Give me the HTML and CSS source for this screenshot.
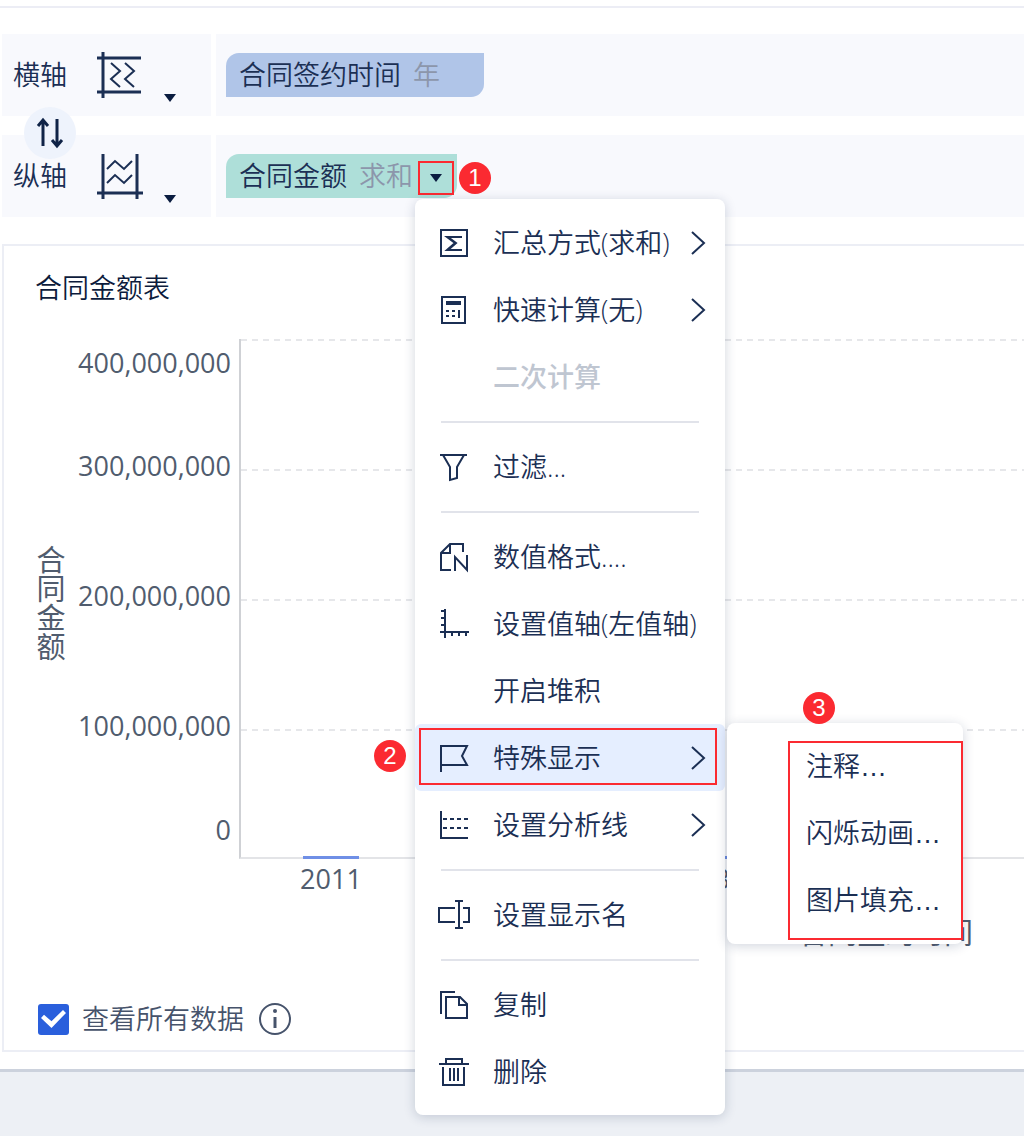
FILE: index.html
```html
<!DOCTYPE html>
<html lang="zh-CN">
<head>
<meta charset="utf-8">
<meta name="viewport" content="width=device-width, initial-scale=1">
<title>合同金额表</title>
<link rel="stylesheet" href="styles.css">
</head>
<body>
<main class="page">
  <header class="topbar"></header>

  <section class="axes">
    <div class="axis-row">
      <div class="axis-head">
        <span class="axis-name">横轴</span>
        <button class="axis-type" type="button" aria-label="横轴类型">
          <svg class="axis-icon" viewBox="0 0 48 48"><path class="bold" d="M7 1v46M1 7h44M1 41h44"/><path d="M15 12l9 8-9 8 9 8M29 12l9 8-9 8 9 8"/></svg>
          <svg class="caret" viewBox="0 0 12 8"><path d="M0 0h12L6 8z"/></svg>
        </button>
      </div>
      <div class="axis-fields">
        <div class="pill pill-blue"><span>合同签约时间</span><span class="pill-note">年</span></div>
      </div>
    </div>
    <div class="axis-row">
      <div class="axis-head">
        <span class="axis-name">纵轴</span>
        <button class="axis-type" type="button" aria-label="纵轴类型">
          <svg class="axis-icon" viewBox="0 0 48 48"><path class="bold" d="M7 2v45M41 2v45M1 41h46"/><path d="M11 17l8-8 9 8 8-8M11 31l8-8 9 8 8-8"/></svg>
          <svg class="caret" viewBox="0 0 12 8"><path d="M0 0h12L6 8z"/></svg>
        </button>
      </div>
      <div class="axis-fields">
        <div class="pill pill-green">
          <span>合同金额</span><span class="pill-note">求和</span>
          <button class="pill-toggle" type="button" aria-label="字段菜单" aria-expanded="true">
            <svg class="caret" viewBox="0 0 12 8"><path d="M0 0h12L6 8z"/></svg>
          </button>
          <span class="badge badge-1">1</span>

          <ul class="menu">
            <li class="item"><button type="button">
              <svg class="icon" viewBox="0 0 30 30"><path d="M2 2h26v26H2z"/><path d="M23 9H8l8 6-8 7h15M9 9l8 6-8 7"/></svg>
              <span>汇总方式(求和)</span>
              <svg class="chevron" viewBox="0 0 14 24"><path d="M1 1l12 11L1 23"/></svg></button></li>
            <li class="item"><button type="button">
              <svg class="icon" viewBox="0 0 30 30"><path d="M3 2h23v26H3z"/><path stroke-width="4" d="M7 8h15"/><path d="M7 16h3M13 16h3M7 21h3M13 21h3M20 15v8"/></svg>
              <span>快速计算(无)</span>
              <svg class="chevron" viewBox="0 0 14 24"><path d="M1 1l12 11L1 23"/></svg></button></li>
            <li class="item"><button type="button" disabled><span class="icon"></span><span>二次计算</span></button></li>
            <li class="rule" role="separator"></li>
            <li class="item"><button type="button">
              <svg class="icon" viewBox="0 0 30 30"><path d="M1 3h27M4 3l7 12v13l7-2V15l7-12"/></svg>
              <span>过滤...</span></button></li>
            <li class="rule" role="separator"></li>
            <li class="item"><button type="button">
              <svg class="icon" viewBox="0 0 30 30"><path d="M12 28H2V11l9-9h13v8M11 2v9H2M16 29V15l12 13V13"/></svg>
              <span>数值格式....</span></button></li>
            <li class="item"><button type="button">
              <svg class="icon" viewBox="0 0 30 30"><path d="M6 0v29M1 23h29M2 2h4M2 9h4M2 16h4M13 23v4M20 23v4M27 23v4"/></svg>
              <span>设置值轴(左值轴)</span></button></li>
            <li class="item"><button type="button"><span class="icon"></span><span>开启堆积</span></button></li>
            <li class="item item-open"><button type="button" aria-expanded="true">
              <svg class="icon" viewBox="0 0 30 30"><path d="M2 29V3h26l-5 10 5 9H2"/></svg>
              <span>特殊显示</span>
              <svg class="chevron" viewBox="0 0 14 24"><path d="M1 1l12 11L1 23"/></svg></button>
              <span class="frame frame-2"></span>
              <span class="badge badge-2">2</span>
              <ul class="submenu">
                <li class="item"><button type="button">注释…</button></li>
                <li class="item"><button type="button">闪烁动画…</button></li>
                <li class="item"><button type="button">图片填充…</button></li>
                <li class="frame frame-3" aria-hidden="true"></li>
                <li class="badge badge-3">3</li>
              </ul></li>
            <li class="item"><button type="button">
              <svg class="icon" viewBox="0 0 30 30"><path d="M2 1v27h27"/><path stroke-dasharray="4 3" d="M4 9h25M4 18h25"/></svg>
              <span>设置分析线</span>
              <svg class="chevron" viewBox="0 0 14 24"><path d="M1 1l12 11L1 23"/></svg></button></li>
            <li class="rule" role="separator"></li>
            <li class="item"><button type="button">
              <svg class="icon" viewBox="0 0 30 30"><path d="M16 8H0v14h16M24 8h6v14h-6M20 1v27M16 1h8M16 28h8"/></svg>
              <span>设置显示名</span></button></li>
            <li class="rule" role="separator"></li>
            <li class="item"><button type="button">
              <svg class="icon" viewBox="0 0 30 30"><path d="M2 24V2h14M7 7h14l7 7v14H7zM20 7v8h8"/></svg>
              <span>复制</span></button></li>
            <li class="item"><button type="button">
              <svg class="icon" viewBox="0 0 30 30"><path d="M0 7h30M7 7V2h16v5M4 10v18h21V10M11 11v13M15 11v13M19 11v13"/></svg>
              <span>删除</span></button></li>
          </ul>
        </div>
      </div>
    </div>
    <button class="swap" type="button" aria-label="交换横纵轴">
      <svg viewBox="0 0 30 30"><path d="M8 28V3M3 8l5-6 5 6M22 1v26M17 22l5 6 5-6"/></svg>
    </button>
  </section>

  <section class="card">
    <h1 class="card-title">合同金额表</h1>
    <div class="chart">
      <div class="y-title">合同金额</div>
      <div class="y-labels">
        <span class="y-first">400,000,000</span>
        <span>300,000,000</span>
        <span>200,000,000</span>
        <span>100,000,000</span>
        <span class="y-last">0</span>
      </div>
      <div class="plot-view">
        <div class="plot">
          <div class="bands"><i></i><i></i><i></i><i></i></div>
          <div class="years">
            <div class="year">2011</div>
            <div class="year">2012</div>
            <div class="year">2013</div>
            <div class="year">2014</div>
          </div>
          <div class="x-title">合同签约时间</div>
        </div>
      </div>
    </div>
    <footer class="card-foot">
      <input class="tick" type="checkbox" id="all-data" checked>
      <label for="all-data">查看所有数据</label>
      <svg class="info" viewBox="0 0 32 32"><circle cx="16" cy="16" r="15"/><path d="M16 14v11"/><circle class="dot" cx="16" cy="8" r="2"/></svg>
    </footer>
  </section>
  <div class="bottom"></div>
</main>
</body>
</html>
```

FILE: styles.css
```css
* { box-sizing: border-box; }

body {
  margin: 0;
  background: #fff;
  color: #1b2f54;
  font: 350 27px/40px "Open Sans", "Noto Sans CJK SC", sans-serif;
}

ul { list-style: none; margin: 0; padding: 0; }

button {
  margin: 0;
  padding: 0;
  border: 0;
  background: none;
  color: inherit;
  font: inherit;
  text-align: left;
}

svg {
  display: block;
  fill: none;
  stroke: #1b2f54;
  stroke-width: 2;
  overflow: visible;
}

.page {
  display: flex;
  flex-direction: column;
  min-height: 100vh;
  overflow: hidden;
}

.topbar { height: 8px; border-bottom: 2px solid #ecedf5; }

/* axis shelves */
.axes {
  position: relative;
  z-index: 2;
  display: flex;
  flex-direction: column;
  gap: 19px;
  padding: 26px 0 27px 2px;
}

.axis-row { display: flex; gap: 5px; height: 82px; }

.axis-head {
  display: flex;
  align-items: center;
  gap: 29px;
  width: 209px;
  padding-left: 11px;
  background: #f8f9fd;
}

.axis-type { display: flex; align-items: flex-end; gap: 20px; }
.axis-icon { width: 48px; height: 48px; }
.axis-icon .bold { stroke-width: 3; }
.caret { width: 12px; height: 8px; fill: #0b1d40; stroke: none; }
.axis-type .caret { margin-bottom: -3px; }

.axis-fields {
  display: flex;
  flex: 1;
  align-items: center;
  padding-left: 10px;
  background: #f8f9fd;
}

.pill {
  position: relative;
  display: flex;
  align-items: center;
  gap: 12px;
  height: 44px;
  padding-left: 13px;
  border-radius: 13px 0;
}

.pill-blue { width: 258px; background: #b0c5e8; }
.pill-green { width: 231px; background: #aedfd9; }
.pill-note { color: #8c96ab; }

.pill-toggle {
  position: absolute;
  top: 7px;
  right: 3px;
  display: flex;
  align-items: center;
  justify-content: center;
  width: 36px;
  height: 34px;
  border: 2px solid #fb2a31;
}

.swap {
  position: absolute;
  top: 99px;
  left: 24px;
  display: flex;
  align-items: center;
  justify-content: center;
  width: 52px;
  height: 52px;
  border-radius: 50%;
  background: #eef3fc;
}

.swap svg { width: 30px; height: 30px; stroke-width: 3; stroke: #0f2347; }

/* numbered callouts */
.badge {
  position: absolute;
  width: 32px;
  height: 32px;
  border-radius: 50%;
  background: #fb2a31;
  color: #fff;
  font: 400 24px/32px "Liberation Sans", sans-serif;
  text-align: center;
}

.badge-1 { top: 8px; left: 233px; }
.badge-2 { top: 16px; left: -41px; }
.badge-3 { top: -31px; left: 76px; }

.frame { position: absolute; border: 2px solid #fb2a31; pointer-events: none; }
.frame-2 { inset: 4px 8px 6px 4px; }
.frame-3 { inset: 18px 0 4px 61px; }

/* menus */
.menu,
.submenu {
  position: absolute;
  padding: 10px 0;
  border-radius: 8px;
  background: #fff;
  box-shadow: 0 2px 12px rgba(27, 47, 84, .2);
}

.menu { top: 45px; left: 189px; width: 310px; }
.submenu { top: -1px; left: 312px; width: 236px; }

.item button {
  display: flex;
  align-items: center;
  width: 100%;
  height: 67px;
  padding: 0 20px 0 24px;
  white-space: nowrap;
}

.item button:disabled { color: #bfc6d1; font-weight: 500; }
.icon { flex: none; width: 30px; height: 30px; margin-right: 24px; }
.chevron { flex: none; width: 14px; height: 24px; margin-left: auto; }
.item-open { position: relative; }
.item-open > button { border-radius: 6px; background: #e5eeff; }

.submenu .item button {
  padding-left: 79px;
  font-family: "Liberation Sans", "Noto Sans CJK SC", sans-serif;
}

.rule {
  height: 2px;
  margin: 11px 26px 10px;
  background: #e1e3ea;
}

/* chart card */
.card {
  margin-left: 2px;
  padding: 22px 0 15px 31px;
  border: 2px solid #eceef5;
  border-right: 0;
}

.card-title {
  margin: 0 0 31px;
  color: #0c1b3c;
  font-size: 27px;
  font-weight: 350;
  line-height: 40px;
}

.chart { display: flex; color: #505c6e; font-weight: 400; }

.y-title {
  height: 520px;
  padding-top: 8px;
  font-size: 29px;
  line-height: 29px;
  text-align: center;
  writing-mode: vertical-rl;
}

.y-labels {
  display: grid;
  grid-template-rows: 62px 130px 130px 130px 68px;
  align-items: center;
  width: 175px;
  height: 520px;
  padding-right: 8px;
  text-align: right;
}

.y-first { align-self: start; line-height: 48px; }
.y-last { align-self: end; line-height: 58px; }

.plot-view { flex: 1; min-width: 0; overflow: hidden; }
.plot { width: 1294px; }

.bands {
  height: 520px;
  border-left: 2px solid #cfd1d5;
  border-bottom: 2px solid #e3e4e7;
}

.bands i {
  display: block;
  height: 130px;
  background: repeating-linear-gradient(90deg, #e6e7ea 0 6px, transparent 6px 11px) 0 0 / 100% 2px no-repeat;
}

.years { display: flex; }
.year { width: 184px; text-align: center; }

.year::before {
  content: "";
  display: block;
  width: 56px;
  height: 3px;
  margin: -3px auto 0;
  background: #6f8fe6;
  position: relative;
}

.x-title {
  margin-top: 14px;
  font-size: 29px;
  text-align: center;
}

.card-foot {
  display: flex;
  align-items: center;
  gap: 13px;
  margin-top: 50px;
  padding-left: 3px;
  color: #46536b;
  line-height: 32px;
}

.tick {
  appearance: none;
  display: grid;
  place-items: center;
  width: 31px;
  height: 31px;
  margin: 0;
  border-radius: 3px;
  background: #2a5fdc;
}

.tick::before {
  content: "";
  width: 25px;
  height: 18px;
  background: #fff;
  clip-path: polygon(0 44%, 12% 27%, 42% 62%, 88% 0, 100% 16%, 42% 100%);
}

.info { width: 32px; height: 32px; margin-left: 2px; stroke: #46536b; }
.info path { stroke-width: 3; }
.info .dot { fill: #46536b; stroke: none; }

.bottom {
  flex: 1;
  min-height: 67px;
  margin-top: 17px;
  border-top: 3px solid #ccd2dd;
  background: #edf0f5;
}
```
